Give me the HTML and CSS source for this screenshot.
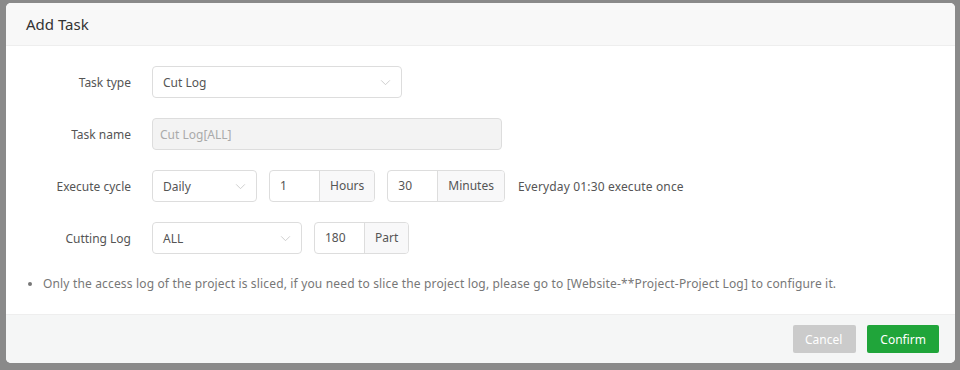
FILE: index.html
```html
<!DOCTYPE html>
<html lang="en">
<head>
<meta charset="UTF-8">
<meta name="viewport" content="width=device-width, initial-scale=1.0">
<title>Add Task</title>
<link rel="stylesheet" href="styles.css">
</head>
<body>

<div class="backdrop">
 <div class="dialog">
  <div class="dialog-header">Add Task</div>

  <div class="dialog-body">
   <div class="form-row">
    <div class="form-label">Task type</div>
    <div class="select select-type">
     <span>Cut Log</span>
     <svg class="arrow" viewBox="0 0 12 8"><path d="M1 1.5 L6 6.5 L11 1.5" /></svg>
    </div>
   </div>

   <div class="form-row">
    <div class="form-label">Task name</div>
    <div class="input input-name disabled">Cut Log[ALL]</div>
   </div>

   <div class="form-row">
    <div class="form-label">Execute cycle</div>
    <div class="select select-cycle">
     <span>Daily</span>
     <svg class="arrow" viewBox="0 0 12 8"><path d="M1 1.5 L6 6.5 L11 1.5" /></svg>
    </div>
    <div class="input-group">
     <div class="group-input">1</div>
     <div class="group-addon">Hours</div>
    </div>
    <div class="input-group">
     <div class="group-input">30</div>
     <div class="group-addon">Minutes</div>
    </div>
    <div class="cycle-text">Everyday 01:30 execute once</div>
   </div>

   <div class="form-row">
    <div class="form-label">Cutting Log</div>
    <div class="select select-log">
     <span>ALL</span>
     <svg class="arrow" viewBox="0 0 12 8"><path d="M1 1.5 L6 6.5 L11 1.5" /></svg>
    </div>
    <div class="input-group">
     <div class="group-input">180</div>
     <div class="group-addon">Part</div>
    </div>
   </div>

   <ul class="tips">
    <li>Only the access log of the project is sliced, if you need to slice the project log, please go to [Website-**Project-Project Log] to configure it.</li>
   </ul>
  </div>

  <div class="dialog-footer">
   <button class="btn btn-cancel">Cancel</button>
   <button class="btn btn-confirm">Confirm</button>
  </div>
 </div>
</div>

</body>
</html>
```

FILE: styles.css
```css
body, html {
 width: 100%;
 height: 100%;
 margin: 0;
 font-family: "Noto Sans", "Liberation Sans", sans-serif;
 overflow: hidden;
 background-color: #8a8a8a;
}
.backdrop {
 padding: 3px 0 0 6px;
}
.dialog {
 width: 949px;
 height: 360px;
 background-color: #fff;
 border-radius: 5px;
 overflow: hidden;
 display: flex;
 flex-direction: column;
}
.dialog-header {
 height: 42px;
 line-height: 42px;
 padding-left: 20px;
 font-size: 15px;
 color: #333;
 background-color: #f8f8f8;
 border-bottom: 1px solid #eee;
}
.dialog-body {
 flex: 1;
 padding-top: 20px;
}
.form-row {
 display: flex;
 align-items: center;
 height: 32px;
 margin-bottom: 20px;
}
.form-label {
 width: 125px;
 padding-right: 21px;
 text-align: right;
 font-size: 12px;
 color: #555;
}
.select, .input, .input-group {
 box-sizing: border-box;
 height: 32px;
 border: 1px solid #ddd;
 border-radius: 4px;
 font-size: 12px;
 color: #555;
}
.select {
 display: flex;
 align-items: center;
 justify-content: space-between;
 padding: 0 10px;
}
.arrow {
 width: 11px;
 height: 7px;
 fill: none;
 stroke: #c8c8c8;
 stroke-width: 1;
}
.select-type {
 width: 250px;
}
.select-cycle {
 width: 105px;
 margin-right: 12px;
}
.select-log {
 width: 150px;
 margin-right: 12px;
}
.input {
 display: flex;
 align-items: center;
 padding: 0 7px;
}
.input-name {
 width: 350px;
}
.disabled {
 background-color: #f3f3f3;
 color: #aaa;
}
.input-group {
 display: flex;
 margin-right: 12px;
 overflow: hidden;
}
.group-input {
 width: 49px;
 box-sizing: border-box;
 padding-left: 10px;
 line-height: 30px;
}
.group-addon {
 padding: 0 10px;
 line-height: 30px;
 background-color: #f8f8f9;
 border-left: 1px solid #ddd;
}
.cycle-text {
 margin-left: 1px;
 font-size: 12px;
 letter-spacing: 0.15px;
 color: #555;
}
.tips {
 margin: 0;
 padding-left: 37px;
 font-size: 12px;
 letter-spacing: 0.16px;
 color: #777;
}
.tips li {
 line-height: 20px;
}
.dialog-footer {
 height: 48px;
 display: flex;
 justify-content: flex-end;
 align-items: center;
 padding-right: 16px;
 background-color: #f5f6f6;
 border-top: 1px solid #eee;
}
.btn {
 height: 28px;
 padding: 0 13px;
 margin-left: 11px;
 font-family: inherit;
 font-size: 12px;
 color: #fff;
 border: none;
 border-radius: 2px;
}
.btn-cancel {
 padding: 0 14px 0 12px;
 background-color: #cbcbcb;
}
.btn-confirm {
 background-color: #20a53a;
}
```
